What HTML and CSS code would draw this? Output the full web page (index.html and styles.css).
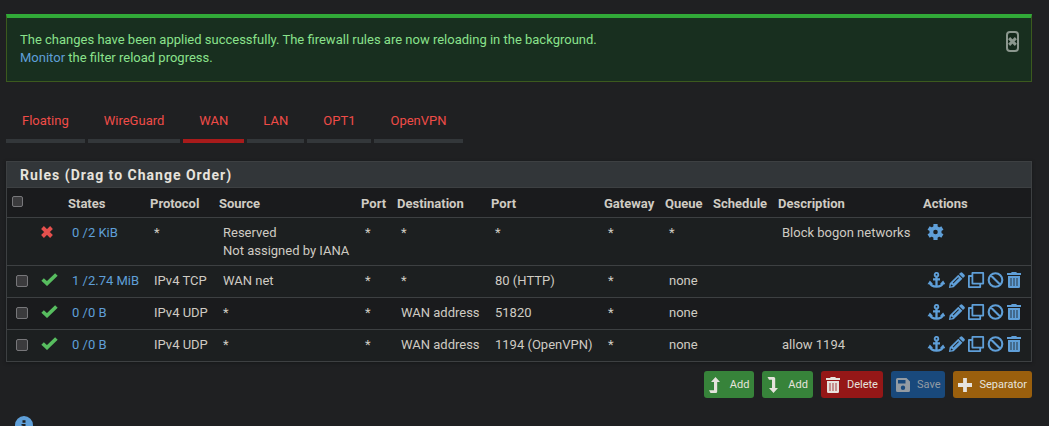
FILE: index.html
```html
<!DOCTYPE html>
<html lang="en">
<head>
<meta charset="utf-8">
<title>Firewall: Rules</title>
<link rel="stylesheet" href="styles.css">
</head>
<body>
<svg class="sprite" aria-hidden="true">
  <symbol id="i-anchor" viewBox="0 0 18 16">
    <g fill="none" stroke="currentColor">
      <circle cx="9.5" cy="2.7" r="1.8" stroke-width="1.9"/>
      <path d="M9.5 4.4V14.5M6 7.3H13" stroke-width="2.3"/>
      <path d="M2.9 10.800C3.600 13.400 6.200 14.600 9.500 14.600S15.400 13.400 16.100 10.800" stroke-width="2.400"/>
    </g>
    <path fill="currentColor" d="M.5 12.200L2.900 8.400L6.200 12.200ZM18.500 12.200L16.100 8.400L12.800 12.200Z"/>
  </symbol>
  <symbol id="i-pencil" viewBox="0 0 18 16">
    <path fill="currentColor" fill-rule="evenodd" d="M13.400.7Q14.400-.2 15.400.7L17.400 2.700Q18.300 3.700 17.400 4.700L16 6.100L12 2.100ZM11.300 2.700L15.400 6.800L6.700 15.300L1.900 16L2.700 11.300ZM11.300 5.300L5.800 10.800L6.400 11.400L11.900 5.900ZM4 12.400L3.600 14.400L5.600 14V12.900H4.700V12.400Z"/>
  </symbol>
  <symbol id="i-clone" viewBox="0 0 18 16">
    <path d="M5.400.9H16.200V11.600H5.400ZM4.700 4H1.900V15.100H13.200V12" fill="none" stroke="currentColor" stroke-width="1.800" stroke-linejoin="round"/>
  </symbol>
  <symbol id="i-ban" viewBox="0 0 18 16">
    <path d="M15.300 8A6.800 6.800 0 1 1 1.700 8A6.800 6.800 0 1 1 15.300 8ZM3.700 3.200L13.300 12.800" fill="none" stroke="currentColor" stroke-width="2.100"/>
  </symbol>
  <symbol id="i-trash" viewBox="0 0 14 16">
    <path fill="currentColor" fill-rule="evenodd" d="M0 1H4L4.800 0H9.200L10 1H14V3H0ZM1 4H13V14.700Q13 16 11.700 16H2.300Q1 16 1 14.700ZM3.600 6V14H4.400V6ZM6.600 6V14H7.400V6ZM9.600 6V14H10.400V6Z"/>
  </symbol>
  <symbol id="i-gear" viewBox="0 0 18 16">
    <g fill="none" stroke="currentColor">
      <circle cx="8.500" cy="8" r="4.200" stroke-width="3.800"/>
      <path d="M8.500 0V3M8.500 13V16M1.600 4L4.200 5.500M12.800 10.500L15.400 12M1.600 12L4.200 10.500M12.800 5.500L15.400 4" stroke-width="4.200"/>
    </g>
  </symbol>
  <symbol id="i-check" viewBox="0 0 17 13">
    <path d="M1.600 6.500L6 10.500L15.400 1.500" fill="none" stroke="currentColor" stroke-width="3.700"/>
  </symbol>
  <symbol id="i-times" viewBox="0 0 12 12">
    <path d="M1.500 1.500L10.500 10.500M10.500 1.500L1.500 10.500" fill="none" stroke="currentColor" stroke-width="3.900"/>
  </symbol>
  <symbol id="i-up" viewBox="0 0 14 16">
    <path fill="currentColor" d="M6.500 0L11 5H8.200V14.500Q8.200 16 6.700 16H1.500L0 13.300H5V5H2Z"/>
  </symbol>
  <symbol id="i-down" viewBox="0 0 14 16">
    <path fill="currentColor" d="M6.500 16L11 11H8.200V1.500Q8.200 0 6.700 0H.5L2 2.700H5V11H2Z"/>
  </symbol>
  <symbol id="i-save" viewBox="0 0 14 14">
    <path fill="currentColor" fill-rule="evenodd" d="M1.500 0H10.500L14 3.500V12.500Q14 14 12.500 14H1.500Q0 14 0 12.500V1.500Q0 0 1.500 0ZM2 2V5.500H9.500V2ZM7 7.500A2.200 2.200 0 1 0 7 11.900A2.200 2.200 0 1 0 7 7.500Z"/>
  </symbol>
  <symbol id="i-plus" viewBox="0 0 14 14">
    <path d="M7 0V14M0 7H14" stroke="currentColor" stroke-width="3.800"/>
  </symbol>
  <symbol id="i-info" viewBox="0 0 18 18">
    <path fill="currentColor" fill-rule="evenodd" d="M9 0A9 9 0 1 0 9 18A9 9 0 1 0 9 0ZM7.500 4.200H10.500V6.700H7.500ZM6.500 8H10.500V13H11.500V14.500H6.500V13H7.500V9.500H6.500Z"/>
  </symbol>
</svg>

<main class="page">
  <div class="alert" role="alert">
    <div>The changes have been applied successfully. The firewall rules are now reloading in the background.<br><a href="#">Monitor</a> the filter reload progress.</div>
    <button class="close" type="button" aria-label="Close"><svg class="close-icon"><use href="#i-times"/></svg></button>
  </div>

  <nav class="tabs">
    <a href="#">Floating</a>
    <a href="#">WireGuard</a>
    <a href="#" class="active">WAN</a>
    <a href="#">LAN</a>
    <a href="#">OPT1</a>
    <a href="#">OpenVPN</a>
  </nav>

  <section class="panel">
    <h2>Rules (Drag to Change Order)</h2>
    <table class="rules">
      <colgroup>
        <col class="c-check"><col class="c-icon"><col class="c-states"><col class="c-proto"><col class="c-source"><col class="c-sport"><col class="c-dest"><col class="c-dport"><col class="c-gateway"><col class="c-queue"><col class="c-schedule"><col class="c-descr"><col class="c-actions">
      </colgroup>
      <thead>
        <tr><th><input type="checkbox" aria-label="Select all rules"></th><th></th><th>States</th><th>Protocol</th><th>Source</th><th>Port</th><th>Destination</th><th>Port</th><th>Gateway</th><th>Queue</th><th>Schedule</th><th>Description</th><th>Actions</th></tr>
      </thead>
      <tbody>
        <tr class="shade tall">
          <td></td><td><svg class="times"><use href="#i-times"/></svg></td><td><a href="#">0 /2 KiB</a></td><td>*</td><td>Reserved<br>Not assigned by IANA</td><td>*</td><td>*</td><td>*</td><td>*</td><td>*</td><td></td><td>Block bogon networks</td>
          <td><div class="actions"><a href="#" aria-label="Settings"><svg><use href="#i-gear"/></svg></a></div></td>
        </tr>
        <tr class="shade">
          <td><input type="checkbox" aria-label="Select rule 1"></td><td><svg class="check"><use href="#i-check"/></svg></td><td><a href="#">1 /2.74 MiB</a></td><td>IPv4 TCP</td><td>WAN net</td><td>*</td><td>*</td><td>80 (HTTP)</td><td>*</td><td>none</td><td></td><td></td>
          <td><div class="actions"><a href="#" aria-label="Move"><svg><use href="#i-anchor"/></svg></a><a href="#" aria-label="Edit"><svg><use href="#i-pencil"/></svg></a><a href="#" aria-label="Copy"><svg><use href="#i-clone"/></svg></a><a href="#" aria-label="Disable"><svg><use href="#i-ban"/></svg></a><a href="#" aria-label="Delete"><svg class="trash"><use href="#i-trash"/></svg></a></div></td>
        </tr>
        <tr>
          <td><input type="checkbox" aria-label="Select rule 2"></td><td><svg class="check"><use href="#i-check"/></svg></td><td><a href="#">0 /0 B</a></td><td>IPv4 UDP</td><td>*</td><td>*</td><td>WAN address</td><td>51820</td><td>*</td><td>none</td><td></td><td></td>
          <td><div class="actions"><a href="#" aria-label="Move"><svg><use href="#i-anchor"/></svg></a><a href="#" aria-label="Edit"><svg><use href="#i-pencil"/></svg></a><a href="#" aria-label="Copy"><svg><use href="#i-clone"/></svg></a><a href="#" aria-label="Disable"><svg><use href="#i-ban"/></svg></a><a href="#" aria-label="Delete"><svg class="trash"><use href="#i-trash"/></svg></a></div></td>
        </tr>
        <tr class="shade">
          <td><input type="checkbox" aria-label="Select rule 3"></td><td><svg class="check"><use href="#i-check"/></svg></td><td><a href="#">0 /0 B</a></td><td>IPv4 UDP</td><td>*</td><td>*</td><td>WAN address</td><td>1194 (OpenVPN)</td><td>*</td><td>none</td><td></td><td>allow 1194</td>
          <td><div class="actions"><a href="#" aria-label="Move"><svg><use href="#i-anchor"/></svg></a><a href="#" aria-label="Edit"><svg><use href="#i-pencil"/></svg></a><a href="#" aria-label="Copy"><svg><use href="#i-clone"/></svg></a><a href="#" aria-label="Disable"><svg><use href="#i-ban"/></svg></a><a href="#" aria-label="Delete"><svg class="trash"><use href="#i-trash"/></svg></a></div></td>
        </tr>
      </tbody>
    </table>
  </section>

  <div class="toolbar">
    <button type="button" class="btn green"><svg><use href="#i-up"/></svg>Add</button>
    <button type="button" class="btn green"><svg><use href="#i-down"/></svg>Add</button>
    <button type="button" class="btn red"><svg><use href="#i-trash"/></svg>Delete</button>
    <button type="button" class="btn blue" disabled><svg><use href="#i-save"/></svg>Save</button>
    <button type="button" class="btn orange"><svg><use href="#i-plus"/></svg>Separator</button>
  </div>

  <a class="info" href="#" aria-label="Information"><svg><use href="#i-info"/></svg></a>
</main>
</body>
</html>
```
FILE: styles.css
```css
* { box-sizing: border-box; }

body {
  margin: 0;
  height: 100vh;
  overflow: hidden;
  background: #1f2022;
  color: #cfcbc3;
  font: 13px/18px Roboto, sans-serif;
}

a { color: #5f9fd8; text-decoration: none; }
svg { display: block; }
.sprite { display: none; }

.page { padding: 14px 17px 0 6px; }

.alert {
  display: flex;
  justify-content: space-between;
  align-items: flex-start;
  padding: 13px 12px 14px 13px;
  border: 1px solid #3c5a1e;
  border-top: 4px solid #31a938;
  background: #182f1f;
  color: #8ae28c;
}

.close {
  display: grid;
  place-items: center;
  width: 13px;
  height: 21px;
  padding: 0;
  border: 2px solid #8b978e;
  border-radius: 4px;
  background: #14291b;
  color: #8b978e;
}

.close-icon { width: 9px; height: 9px; }

.tabs {
  display: flex;
  gap: 3px;
  margin: 27px 0 18px;
}

.tabs a {
  padding: 3px 16px 9px;
  border-bottom: 4px solid #33373a;
  color: #ef4c48;
}

.tabs .active { border-color: #a81b1b; }

.panel {
  border: 1px solid #3d4042;
  box-shadow: 0 1px 3px #17181a;
}

.panel h2 {
  margin: 0;
  padding: 4px 13px 3px;
  background: #323639;
  color: #e6e3dd;
  font-size: 14px;
  font-weight: 700;
  line-height: 18px;
  letter-spacing: 1px;
}

.rules {
  width: 100%;
  table-layout: fixed;
  border-collapse: separate;
  border-spacing: 0;
  background: #1a1b1d;
}

.c-check { width: 25px; }
.c-icon { width: 31px; }
.c-states { width: 82px; }
.c-proto { width: 69px; }
.c-source { width: 142px; }
.c-sport { width: 36px; }
.c-dest { width: 94px; }
.c-dport { width: 113px; }
.c-gateway { width: 61px; }
.c-queue { width: 48px; }
.c-schedule { width: 65px; }
.c-descr { width: 145px; }
.c-actions { width: 113px; }

.rules th,
.rules td {
  border-top: 1px solid #3d4042;
  text-align: left;
  vertical-align: top;
  white-space: nowrap;
}

.rules th { padding: 7px 0 4px 5px; font-weight: 700; }
.rules td { padding: 6px 0 7px 9px; }
.rules .tall td { padding-bottom: 5px; }
.rules .shade { background: #1c1f20; }

.rules input {
  display: block;
  appearance: none;
  width: 12px;
  height: 12px;
  margin: 3px 0 0;
  border: 1px solid #77777a;
  border-radius: 2px;
  background: #3b3b3d;
}

.rules th input { width: 11px; height: 11px; margin: 1px 0 0; }

.times { width: 12px; height: 12px; margin-top: 2px; color: #e4504d; }
.check { width: 17px; height: 13px; margin-top: 1px; color: #57bd5f; }

.actions { display: flex; gap: 2px; }
.actions svg { width: 18px; height: 16px; }
.actions .trash { width: 14px; }

.toolbar {
  display: flex;
  justify-content: flex-end;
  gap: 8px;
  margin-top: 9px;
}

.btn {
  display: flex;
  align-items: center;
  gap: 7px;
  height: 27px;
  padding: 0 4px;
  border: 1px solid transparent;
  border-radius: 3px;
  color: #e6e3dd;
  font: 11px/18px Roboto, sans-serif;
}

.btn svg { width: 14px; height: 16px; }
.green { background: #37833a; }
.red { background: #951717; }
.blue { background: #19497c; color: #939ba3; }
.orange { background: #9a5f0d; }

.info {
  display: block;
  width: 18px;
  margin: 18px 0 0 9px;
}

.info svg { width: 18px; height: 18px; }
```
